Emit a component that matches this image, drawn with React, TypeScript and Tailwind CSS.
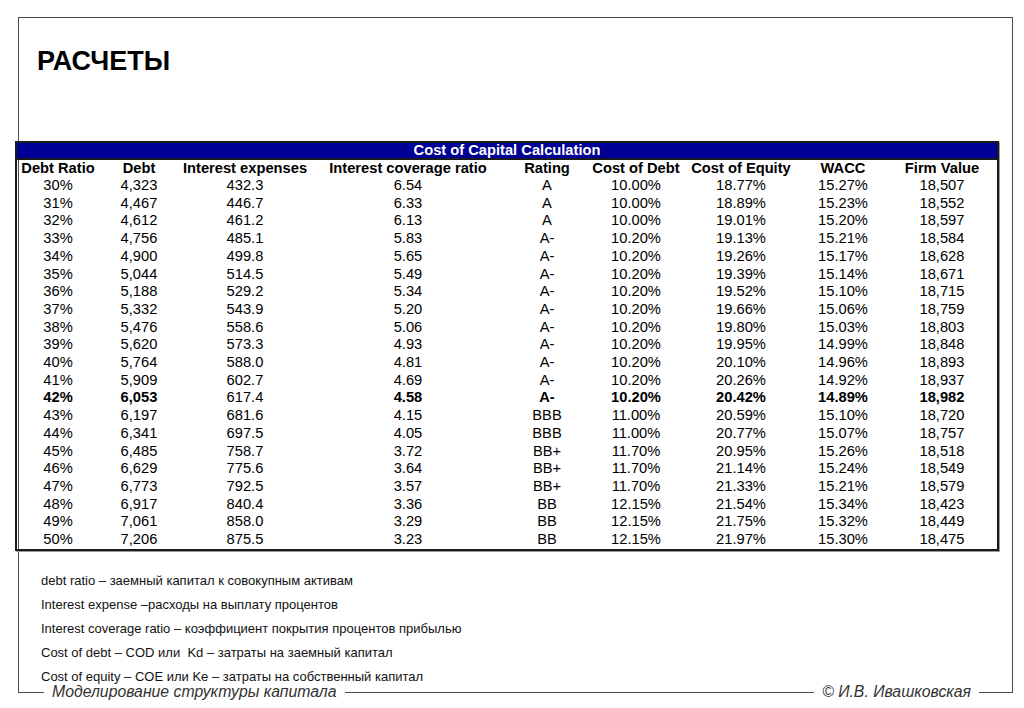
const rows: string[][] = [
  ['30%', '4,323', '432.3', '6.54', 'A', '10.00%', '18.77%', '15.27%', '18,507'],
  ['31%', '4,467', '446.7', '6.33', 'A', '10.00%', '18.89%', '15.23%', '18,552'],
  ['32%', '4,612', '461.2', '6.13', 'A', '10.00%', '19.01%', '15.20%', '18,597'],
  ['33%', '4,756', '485.1', '5.83', 'A-', '10.20%', '19.13%', '15.21%', '18,584'],
  ['34%', '4,900', '499.8', '5.65', 'A-', '10.20%', '19.26%', '15.17%', '18,628'],
  ['35%', '5,044', '514.5', '5.49', 'A-', '10.20%', '19.39%', '15.14%', '18,671'],
  ['36%', '5,188', '529.2', '5.34', 'A-', '10.20%', '19.52%', '15.10%', '18,715'],
  ['37%', '5,332', '543.9', '5.20', 'A-', '10.20%', '19.66%', '15.06%', '18,759'],
  ['38%', '5,476', '558.6', '5.06', 'A-', '10.20%', '19.80%', '15.03%', '18,803'],
  ['39%', '5,620', '573.3', '4.93', 'A-', '10.20%', '19.95%', '14.99%', '18,848'],
  ['40%', '5,764', '588.0', '4.81', 'A-', '10.20%', '20.10%', '14.96%', '18,893'],
  ['41%', '5,909', '602.7', '4.69', 'A-', '10.20%', '20.26%', '14.92%', '18,937'],
  ['42%', '6,053', '617.4', '4.58', 'A-', '10.20%', '20.42%', '14.89%', '18,982'],
  ['43%', '6,197', '681.6', '4.15', 'BBB', '11.00%', '20.59%', '15.10%', '18,720'],
  ['44%', '6,341', '697.5', '4.05', 'BBB', '11.00%', '20.77%', '15.07%', '18,757'],
  ['45%', '6,485', '758.7', '3.72', 'BB+', '11.70%', '20.95%', '15.26%', '18,518'],
  ['46%', '6,629', '775.6', '3.64', 'BB+', '11.70%', '21.14%', '15.24%', '18,549'],
  ['47%', '6,773', '792.5', '3.57', 'BB+', '11.70%', '21.33%', '15.21%', '18,579'],
  ['48%', '6,917', '840.4', '3.36', 'BB', '12.15%', '21.54%', '15.34%', '18,423'],
  ['49%', '7,061', '858.0', '3.29', 'BB', '12.15%', '21.75%', '15.32%', '18,449'],
  ['50%', '7,206', '875.5', '3.23', 'BB', '12.15%', '21.97%', '15.30%', '18,475'],
]

const headers = [
  'Debt Ratio',
  'Debt',
  'Interest expenses',
  'Interest coverage ratio',
  'Rating',
  'Cost of Debt',
  'Cost of Equity',
  'WACC',
  'Firm Value',
]

// column widths in px, fitted to the centers in the slide
const widths = [82, 80, 132, 194, 84, 94, 116, 88, 110]

const notes = [
  'debt ratio – заемный капитал к совокупным активам',
  'Interest expense –расходы на выплату процентов',
  'Interest coverage ratio – коэффициент покрытия процентов прибылью',
  'Cost of debt – COD или  Kd – затраты на заемный капитал',
  'Cost of equity – COE или Ke – затраты на собственный капитал',
]

function CapitalTable() {
  return (
    <div className="ml-[-4px] w-[984px] border-2 border-[#1a1a1a] shadow-[1px_1px_0_#9a9a9a]">
      <div className="h-[15px] bg-[#000096] text-center text-[14.7px] font-bold leading-[15px] text-white">
        Cost of Capital Calculation
      </div>
      <table className="w-[980px] table-fixed border-collapse text-[14.7px] text-black">
        <colgroup>
          {widths.map((w, i) => (
            <col key={i} style={{ width: w }} />
          ))}
        </colgroup>
        <thead>
          <tr className="h-[18px] border-t-2 border-[#1a1a1a]">
            {headers.map((h) => (
              <th key={h} className="whitespace-nowrap p-0 pb-[2px] text-center font-bold leading-[14px]">
                {h}
              </th>
            ))}
          </tr>
        </thead>
        <tbody>
          {rows.map((r) => {
            const best = r[0] === '42%'
            return (
              <tr key={r[0]} className="h-[17.7px]">
                {r.map((cell, i) => (
                  <td
                    key={i}
                    className={`whitespace-nowrap p-0 text-center leading-[17.7px] ${
                      best && i !== 2 ? 'font-bold' : ''
                    }`}
                  >
                    {cell}
                  </td>
                ))}
              </tr>
            )
          })}
        </tbody>
      </table>
    </div>
  )
}

export default function App() {
  return (
    <div className="min-h-[708px] w-[1024px] bg-white pl-[18px] pt-[17px] font-['Liberation_Sans',Arial,sans-serif]">
      <div className="h-[675px] w-[995px] border-x border-t border-[#4a4a4a]">
        <h1 className="ml-[18px] mt-[27px] text-[27px] font-bold leading-[32px] text-black">РАСЧЕТЫ</h1>
        <div className="mt-[64px]">
          <CapitalTable />
        </div>
        <div className="ml-[22px] mt-[18px] text-[13px] leading-[24px] text-[#111]">
          {notes.map((n) => (
            <div key={n} className="whitespace-pre">
              {n}
            </div>
          ))}
        </div>
      </div>
      <div className="-mt-[10px] flex h-[20px] w-[995px] items-center text-[15.8px] italic text-[#333]">
        <div className="h-px w-[26px] bg-[#4a4a4a]" />
        <span className="px-[8px] leading-[20px]">Моделирование структуры капитала</span>
        <div className="h-px flex-1 bg-[#4a4a4a]" />
        <span className="px-[8px] leading-[20px]">© И.В. Ивашковская</span>
        <div className="h-px w-[34px] bg-[#4a4a4a]" />
      </div>
    </div>
  )
}
